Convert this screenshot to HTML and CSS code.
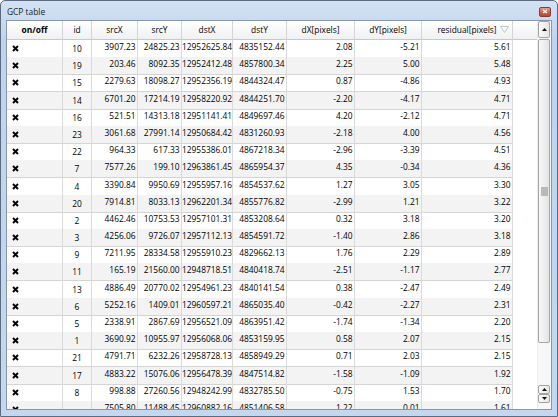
FILE: index.html
```html
<!DOCTYPE html>
<html lang="en">
<head>
    <meta charset="UTF-8">
    <title>GCP table</title>
    <link rel="stylesheet" href="styles.css">
</head>
<body>
    <div class="window">
        <div class="titlebar">
            <span class="title">GCP table</span>
            <span class="close-btn">
                <svg width="6" height="5" viewBox="0 0 6 5"><path d="M1 1L5 4M5 1L1 4" stroke="#fff" stroke-width="1.3"/></svg>
            </span>
        </div>

        <div class="client">
            <div class="table-area">
                <div class="grid-row head">
                    <div class="cell bold">on/off</div>
                    <div class="cell">id</div>
                    <div class="cell">srcX</div>
                    <div class="cell">srcY</div>
                    <div class="cell">dstX</div>
                    <div class="cell">dstY</div>
                    <div class="cell">dX[pixels]</div>
                    <div class="cell">dY[pixels]</div>
                    <div class="cell sorted">residual[pixels]
                        <svg class="sort-mark" width="9" height="7" viewBox="0 0 9 7"><path d="M0.5 0.5H8.5L4.5 6.5Z" fill="none" stroke="#c4c4c4"/></svg>
                    </div>
                    <div class="cell filler"></div>
                </div>
                <div id="rows"></div>
            </div>

            <div class="scrollbar">
                <div class="sb-btn top">
                    <svg width="5" height="3" viewBox="0 0 5 3"><path d="M0 3L2.5 0L5 3Z" fill="#111"/></svg>
                </div>
                <div class="sb-thumb"><div class="grip"></div></div>
                <div class="sb-space"></div>
                <div class="sb-btn small">
                    <svg width="5" height="3" viewBox="0 0 5 3"><path d="M0 3L2.5 0L5 3Z" fill="#111"/></svg>
                </div>
                <div class="sb-btn small">
                    <svg width="5" height="3" viewBox="0 0 5 3"><path d="M0 0L2.5 3L5 0Z" fill="#111"/></svg>
                </div>
            </div>
        </div>
    </div>

    <script>
        // id, srcX, srcY, dstX, dstY, dX, dY, residual
        const points = [
            [10, '3907.23', '24825.23', '12952625.84', '4835152.44', '2.08', '-5.21', '5.61'],
            [19, '203.46', '8092.35', '12952412.48', '4857800.34', '2.25', '5.00', '5.48'],
            [15, '2279.63', '18098.27', '12952356.19', '4844324.47', '0.87', '-4.86', '4.93'],
            [14, '6701.20', '17214.19', '12958220.92', '4844251.70', '-2.20', '-4.17', '4.71'],
            [16, '521.51', '14313.18', '12951141.41', '4849697.46', '4.20', '-2.12', '4.71'],
            [23, '3061.68', '27991.14', '12950684.42', '4831260.93', '-2.18', '4.00', '4.56'],
            [22, '964.33', '617.33', '12955386.01', '4867218.34', '-2.96', '-3.39', '4.51'],
            [7, '7577.26', '199.10', '12963861.45', '4865954.37', '4.35', '-0.34', '4.36'],
            [4, '3390.84', '9950.69', '12955957.16', '4854537.62', '1.27', '3.05', '3.30'],
            [20, '7914.81', '8033.13', '12962201.34', '4855776.82', '-2.99', '1.21', '3.22'],
            [2, '4462.46', '10753.53', '12957101.31', '4853208.64', '0.32', '3.18', '3.20'],
            [3, '4256.06', '9726.07', '12957112.13', '4854591.72', '-1.40', '2.86', '3.18'],
            [9, '7211.95', '28334.58', '12955910.23', '4829662.13', '1.76', '2.29', '2.89'],
            [11, '165.19', '21560.00', '12948718.51', '4840418.74', '-2.51', '-1.17', '2.77'],
            [13, '4886.49', '20770.02', '12954961.23', '4840141.54', '0.38', '-2.47', '2.49'],
            [6, '5252.16', '1409.01', '12960597.21', '4865035.40', '-0.42', '-2.27', '2.31'],
            [5, '2338.91', '2867.69', '12956521.09', '4863951.42', '-1.74', '-1.34', '2.20'],
            [1, '3690.92', '10955.97', '12956068.06', '4853159.95', '0.58', '2.07', '2.15'],
            [21, '4791.71', '6232.26', '12958728.13', '4858949.29', '0.71', '2.03', '2.15'],
            [17, '4883.22', '15076.06', '12956478.39', '4847514.82', '-1.58', '-1.09', '1.92'],
            [8, '998.88', '27260.56', '12948242.99', '4832785.50', '-0.75', '1.53', '1.70'],
            ['', '7505.80', '11488.45', '12960882.16', '4851406.58', '1.22', '0.01', '1.61']
        ];

        const checkIcon = '<svg width="7" height="7" viewBox="0 0 7 7"><path d="M1 1L6 6M6 1L1 6" stroke="#000" stroke-width="1.9"/></svg>';

        function renderRows() {
            const rows = document.getElementById('rows');
            points.forEach(p => {
                const row = document.createElement('div');
                row.className = 'grid-row body-row';
                let html = `<div class="cell check">${checkIcon}</div>`;
                html += `<div class="cell id">${p[0]}</div>`;
                for (let i = 1; i < p.length; i++) {
                    html += `<div class="cell num">${p[i]}</div>`;
                }
                html += '<div class="cell filler"></div>';
                row.innerHTML = html;
                rows.appendChild(row);
            });
        }

        renderRows();
    </script>
</body>
</html>
```

FILE: styles.css
```css
* {
    box-sizing: border-box;
}

body {
    margin: 0;
    background: #fff;
    font-family: "Open Sans", "Noto Sans", sans-serif;
    font-size: 8.4px;
    color: #000;
}

.window {
    width: 558px;
    height: 417px;
    border: 1px solid #5c6b80;
    border-radius: 5px 5px 0 0;
    background: linear-gradient(#d3e2f4, #c0d4ed 40px, #c4d7ef);
    padding: 0 5px 6px 5px;
    display: flex;
    flex-direction: column;
}

.titlebar {
    height: 19px;
    flex: none;
    display: flex;
    align-items: center;
    justify-content: space-between;
    padding: 2px 1px 0 1px;
}

.title {
    color: #1b1b1b;
}

.close-btn {
    width: 12px;
    height: 10px;
    border: 1px solid #8a3a2e;
    border-radius: 2px;
    background: linear-gradient(#e9a08f, #d0604a 50%, #c2452f);
    display: flex;
    align-items: center;
    justify-content: center;
}

.client {
    flex: 1;
    min-height: 0;
    border: 1px solid #8596ae;
    background: #fff;
    display: flex;
    overflow: hidden;
}

.table-area {
    flex: 1;
    min-width: 0;
    overflow: hidden;
}

.grid-row {
    display: grid;
    grid-template-columns: 56px 29px 46px 44px 51px 54px 68px 67px 91px 1fr;
}

.cell {
    white-space: nowrap;
}

.head {
    height: 19px;
}

.head .cell {
    background: linear-gradient(#ffffff, #f0f1f3);
    border-right: 1px solid #d5d5d5;
    border-bottom: 1px solid #c8c8c8;
    text-align: center;
    line-height: 18px;
}

.head .bold {
    font-weight: bold;
}

.head .sorted {
    position: relative;
}

.sort-mark {
    position: absolute;
    right: 3px;
    top: 5px;
}

.head .filler {
    border-right: none;
}

.body-row {
    height: 17.2px;
}

.body-row .cell {
    border-right: 1px solid #dadada;
    border-bottom: 1px solid #d5d5d5;
}

.body-row:nth-child(even) .cell {
    background: #f3f3f3;
}

.body-row .filler,
.body-row:nth-child(even) .filler {
    background: #fff;
    border: none;
}

.check {
    padding: 5px 0 0 5px;
}

.check svg {
    display: block;
}

.id {
    text-align: center;
    line-height: 16px;
    padding-top: 1px;
}

.num {
    text-align: right;
    line-height: 14px;
    padding-right: 1.5px;
}

.scrollbar {
    width: 14px;
    flex: none;
    background: #f7f7f7;
    border-left: 1px solid #ececec;
    display: flex;
    flex-direction: column;
    padding: 0 1px 6px 0;
}

.sb-btn {
    border: 1px solid #a2a2a2;
    border-radius: 2px;
    background: linear-gradient(to right, #fbfbfb, #e6e6e6);
    display: flex;
    align-items: center;
    justify-content: center;
}

.sb-btn.top {
    height: 17px;
}

.sb-btn.small {
    height: 9px;
}

.sb-thumb {
    height: 304px;
    margin-top: 1px;
    border: 1px solid #a6a6a6;
    border-radius: 2px;
    background: linear-gradient(to right, #f8f8f8, #e4e4e4);
    display: flex;
    align-items: center;
    justify-content: center;
}

.grip {
    width: 7px;
    height: 9px;
    background-image: radial-gradient(circle, #9c9c9c 0.6px, transparent 0.9px);
    background-size: 2px 2px;
}

.sb-space {
    flex: 1;
}
```
